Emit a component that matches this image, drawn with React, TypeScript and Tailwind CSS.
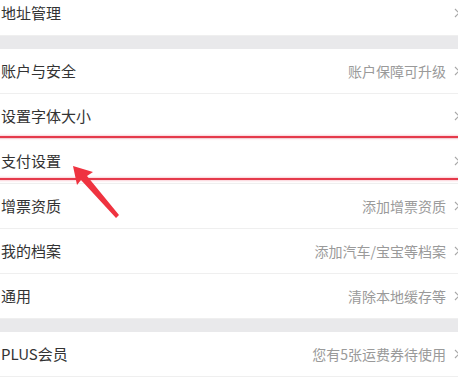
import React from "react";

type Row = { label: string; hint?: string };

const groups: Row[][] = [
  [{ label: "地址管理" }],
  [
    { label: "账户与安全", hint: "账户保障可升级" },
    { label: "设置字体大小" },
    { label: "支付设置" },
    { label: "增票资质", hint: "添加增票资质" },
    { label: "我的档案", hint: "添加汽车/宝宝等档案" },
    { label: "通用", hint: "清除本地缓存等" },
  ],
  [{ label: "PLUS会员", hint: "您有5张运费券待使用" }, { label: "" }],
];

function Chevron() {
  return (
    <svg className="-mr-[2px] ml-[8px] h-[10px] w-[6px] shrink-0" viewBox="0 0 6 10" fill="none">
      <path d="M1 1l4 4-4 4" stroke="#a8a8a8" strokeWidth="1.2" />
    </svg>
  );
}

function SettingRow({ row, first }: { row: Row; first?: boolean }) {
  return (
    <div
      className={`flex h-[45px] items-center border-b border-[#efefef] pl-[1px] ${first ? "-mt-[9px]" : ""}`}
    >
      <span className="flex-1 text-[15px] text-[#333]">{row.label}</span>
      {row.hint && <span className="text-[14px] text-[#9a9a9a]">{row.hint}</span>}
      {row.label && <Chevron />}
    </div>
  );
}

export default function App() {
  return (
    <div
      className="relative h-[384px] w-[458px] overflow-hidden bg-white"
      style={{ fontFamily: '"Noto Sans CJK SC", "Noto Sans", sans-serif' }}
    >
      {groups.map((group, gi) => (
        <div key={gi}>
          {gi > 0 && <div className="h-[13px] bg-[#e9e9eb]" />}
          {group.map((row, ri) => (
            <SettingRow key={ri} row={row} first={gi === 0 && ri === 0} />
          ))}
        </div>
      ))}

      {/* annotation: red box lines and arrow */}
      <div className="absolute left-0 top-[136px] h-[2px] w-full bg-[#e53a4b] shadow-[0_0_2px_1px_rgba(240,120,140,0.35)]" />
      <div className="absolute left-0 top-[178px] h-[2px] w-full bg-[#e53a4b] shadow-[0_0_2px_1px_rgba(240,120,140,0.35)]" />
      <svg className="absolute left-0 top-0" width="458" height="384" viewBox="0 0 458 384">
        <polygon
          points="73,166 93,172 87,176 119,215 116,218 81,180 77,185"
          fill="#ef3340"
        />
      </svg>
    </div>
  );
}
